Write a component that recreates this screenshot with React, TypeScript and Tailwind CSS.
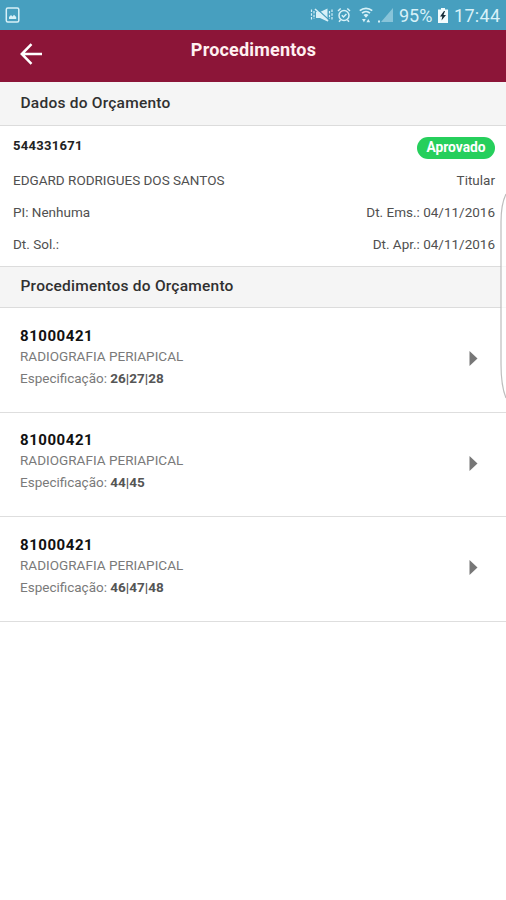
import React from 'react';

interface Procedure {
  id: number;
  code: string;
  name: string;
  teeth: string;
}

const procedures: Procedure[] = [
  { id: 1, code: '81000421', name: 'RADIOGRAFIA PERIAPICAL', teeth: '26|27|28' },
  { id: 2, code: '81000421', name: 'RADIOGRAFIA PERIAPICAL', teeth: '44|45' },
  { id: 3, code: '81000421', name: 'RADIOGRAFIA PERIAPICAL', teeth: '46|47|48' },
];

const StatusBar: React.FC = () => (
  <div className="h-[30px] bg-[#479fbf] flex items-center pl-[5px] pr-[6px] text-[#d8f1f8]">
    <svg className="w-[15px] h-[16px]" viewBox="0 0 15 16" fill="none">
      <rect x="1.300" y="1" width="12.500" height="14" rx="1.500" stroke="currentColor" strokeWidth="1.500" />
      <path d="M4 12v-2l2-2 1.500 1.500 1.500-1.700 2.200 2.200v2z" fill="currentColor" />
    </svg>

    <div className="ml-auto flex items-center">
      {/* vibrate / muted */}
      <svg className="w-[23px] h-[16px]" viewBox="0 0 23 16" fill="none" stroke="currentColor">
        <path d="M1.500 2.500v11M4 4v8M19.500 4v8M22 2.500v11" strokeWidth="1.200" strokeDasharray="2.500 1.200" />
        <path d="M6 5H10L17.500 1.500v13L10 11H6z" fill="currentColor" stroke="none" />
        <path d="M6.500 1.500l12 11" stroke="#479fbf" strokeWidth="1.200" />
        <path d="M5 2l13 12" strokeWidth="1.600" />
      </svg>
      {/* alarm */}
      <svg className="ml-[4px] w-[14px] h-[16px]" viewBox="0 0 14 16" fill="none" stroke="currentColor" strokeWidth="1.500">
        <circle cx="7" cy="8.500" r="5" />
        <path d="M1 4l2.700-2.500M13 4l-2.700-2.500M4.800 8.300l1.700 1.700 2.900-3M3.500 13l-1.500 1.800M10.500 13l1.500 1.800" />
      </svg>
      {/* wifi */}
      <svg className="ml-[8px] w-[14px] h-[16px]" viewBox="0 0 14 16" fill="none" stroke="currentColor">
        <path d="M.8 3.700a9.500 9.500 0 0 1 12.400 0M3 6.200a6 6 0 0 1 8 0" strokeWidth="1.700" />
        <path d="M4.500 8a3.800 3.800 0 0 1 5 0L7 10.800z" fill="currentColor" stroke="none" />
        <path d="M3 12h3.800l-1.900 3.200zM7.400 15.200h3.800l-1.900-3.200z" fill="currentColor" stroke="none" />
      </svg>
      {/* signal */}
      <svg className="ml-[5px] w-[16px] h-[16px]" viewBox="0 0 16 16" fill="currentColor">
        <path d="M15 1v14H3z" opacity=".45" />
        <path d="M0 13.500h2v2H0z" />
      </svg>
      <span className="ml-[5px] w-[36px] text-[18px] leading-[30px] pt-[2px]">95%</span>
      <svg className="ml-[3px] w-[10px] h-[15px]" viewBox="0 0 10 15">
        <path d="M3 0h4v1.500h3V15H0V1.500h3z" fill="#f2fbfd" />
        <path d="M6 3L2 8.500h2.300L3.500 12.500 8 7H5.500L7 3z" fill="#152c38" />
      </svg>
      <span className="ml-[6px] w-[46px] text-[18px] leading-[30px] tracking-[0.300px] pt-[2px]">17:44</span>
    </div>
  </div>
);

const SectionTitle: React.FC<{ className: string; children: React.ReactNode }> = ({ className, children }) => (
  <h2 className={`bg-[#f5f5f5] border-b border-[#dcdcdc] pl-[20.500px] text-[15.500px] tracking-[0.230px] font-medium text-[#303030] ${className}`}>
    {children}
  </h2>
);

const ProcedureRow: React.FC<{ item: Procedure }> = ({ item }) => (
  <li className="h-[104.670px] border-b border-[#dedede] pl-5 pr-7 pt-[17.600px] flex justify-between">
    <div className="text-[13.500px] text-[#7a7a7a]">
      <p className="text-[15px] leading-5 font-bold tracking-[0.550px] text-[#111]">{item.code}</p>
      <p className="leading-[21px] tracking-[0.020px]">{item.name}</p>
      <p className="leading-[23px]">
        Especificação: <b className="text-[#555]">{item.teeth}</b>
      </p>
    </div>
    <svg className="mt-[25.400px] w-[9px] h-[15px]" viewBox="0 0 9 15" fill="#777">
      <path d="M.5 0L8.500 7.500.5 15z" />
    </svg>
  </li>
);

const App: React.FC = () => {
  return (
    <div className="relative w-[506px] h-[900px] overflow-hidden bg-white font-['Roboto',sans-serif]">
      <StatusBar />

      <header className="h-[52px] bg-[#8c1538] grid grid-cols-[1fr_auto_1fr] items-start text-white">
        <svg className="ml-5 mt-[13px] w-[22px] h-[22px]" viewBox="0 0 22 22" fill="none" stroke="currentColor" strokeWidth="2.500">
          <path d="M22 11H2M11.500 1.200L1.800 11l9.700 9.800" />
        </svg>
        <h1 className="text-[18px] leading-[22px] font-bold tracking-[0.200px] pt-[9px] pl-px text-[#fff0f0]">Procedimentos</h1>
      </header>

      <SectionTitle className="h-[44px] leading-[43px]">Dados do Orçamento</SectionTitle>

      <section className="h-[140px] pl-[13px] pr-[11px] text-[13.500px] text-[#505050]">
        <div className="flex justify-between pt-[11px] h-[38px]">
          <span className="text-[13px] leading-[18px] font-bold tracking-[0.300px] text-[#222]">544331671</span>
          <span className="h-[22px] w-[78px] rounded-full bg-[#26cf5c] text-center text-[13.800px] leading-[21px] font-bold text-white">
            Aprovado
          </span>
        </div>
        <div className="flex justify-between leading-8">
          <span>EDGARD RODRIGUES DOS SANTOS</span>
          <span>Titular</span>
        </div>
        <div className="flex justify-between leading-8">
          <span>PI: Nenhuma</span>
          <span>Dt. Ems.: 04/11/2016</span>
        </div>
        <div className="flex justify-between leading-8">
          <span>Dt. Sol.:</span>
          <span>Dt. Apr.: 04/11/2016</span>
        </div>
      </section>

      <SectionTitle className="h-[42px] border-t leading-[38px]">Procedimentos do Orçamento</SectionTitle>

      <ul>
        {procedures.map((item) => (
          <ProcedureRow key={item.id} item={item} />
        ))}
      </ul>

      {/* edge panel handle */}
      <svg className="absolute right-0 top-[192px] w-[6px] h-[208px]" viewBox="0 0 6 208">
        <path d="M6 2Q1 12 1 30V172Q1 194 6 206z" fill="#fff" fillOpacity=".75" />
        <path d="M6 2Q1 12 1 30V172Q1 194 6 206" fill="none" stroke="#bdbdbd" strokeWidth="1.200" />
      </svg>
    </div>
  );
};

export default App;
